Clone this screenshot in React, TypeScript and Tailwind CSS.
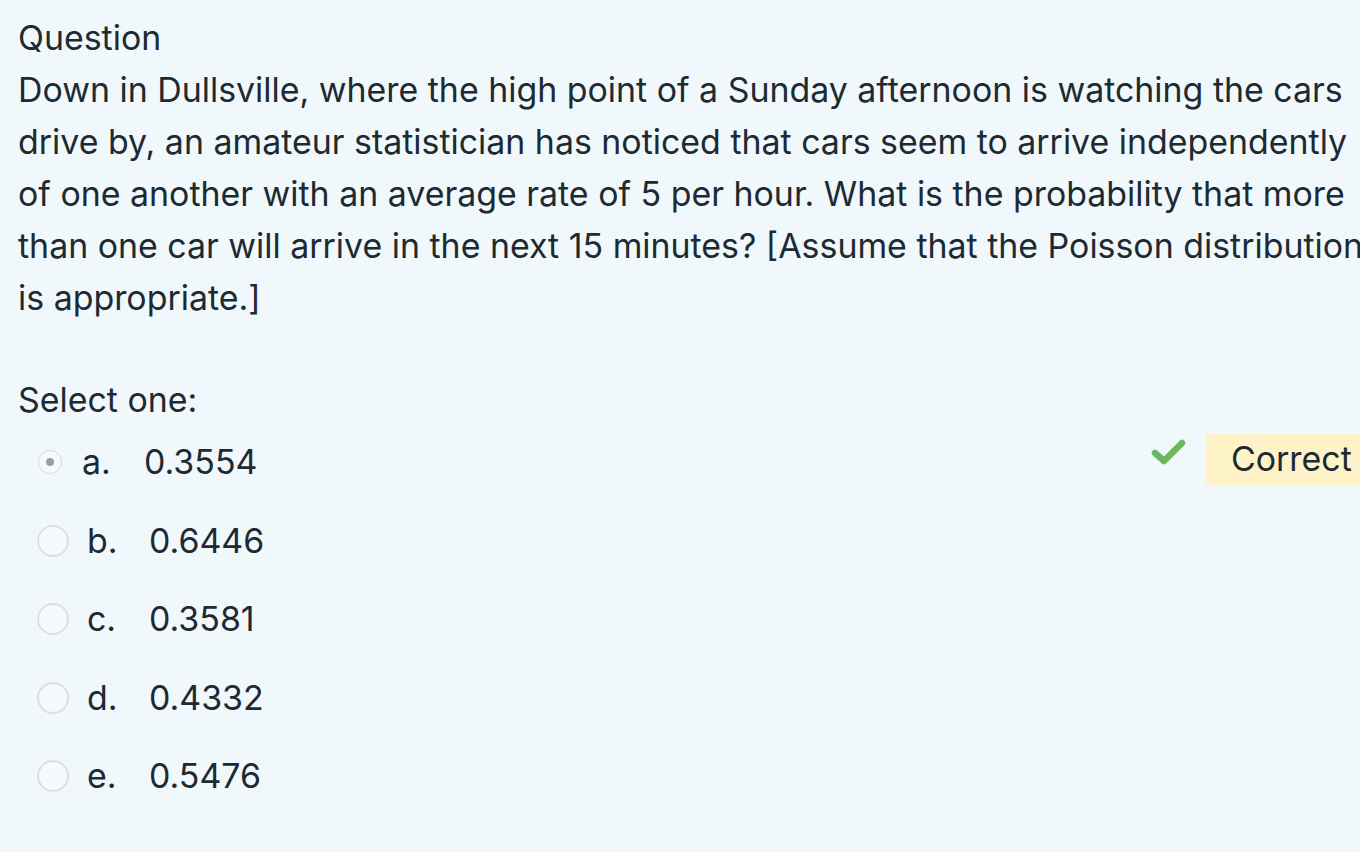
import React from 'react';

const lines = [
  'Down in Dullsville, where the high point of a Sunday afternoon is watching the cars',
  'drive by, an amateur statistician has noticed that cars seem to arrive independently',
  'of one another with an average rate of 5 per hour. What is the probability that more',
  'than one car will arrive in the next 15 minutes? [Assume that the Poisson distribution',
  'is appropriate.]',
];

const options = [
  { key: 'b.', value: '0.6446' },
  { key: 'c.', value: '0.3581' },
  { key: 'd.', value: '0.4332' },
  { key: 'e.', value: '0.5476' },
];

export default function App() {
  return (
    <div
      className="w-[1360px] h-[852px] overflow-hidden bg-[#f1f8fb] text-[#1d2a32] text-[33.9px] leading-[52px]"
      style={{ fontFamily: 'Inter, "Noto Sans", sans-serif' }}
    >
      <div className="pl-[18px] pt-[12px]">
        <div>Question</div>
        {lines.map((l) => (
          <div key={l} className="whitespace-nowrap">{l}</div>
        ))}

        <div className="mt-[50px]">Select one:</div>

        {/* answer a - selected, disabled */}
        <div className="flex items-center h-[52px] mt-[10px]">
          <div className="w-[24px] h-[24px] ml-[20px] rounded-full border border-[#d6dadc] bg-[#f7f9fa] flex items-center justify-center">
            <div className="w-[8px] h-[8px] rounded-full bg-[#9aa0a4]" />
          </div>
          <span className="ml-[20px] w-[62px]">a.</span>
          <span>0.3554</span>
          <div className="ml-auto flex items-center -mt-[6px]">
            <svg width="36" height="30" viewBox="0 0 36 30" className="mr-[19px] -mt-[14px]">
              <path d="M4 16 L13 24 L31 6" fill="none" stroke="#6cb65f" strokeWidth="6.5" strokeLinecap="round" strokeLinejoin="round" />
            </svg>
            <div className="bg-[#fdf2c8] h-[51px] w-[170px] pl-[25px] flex items-center whitespace-nowrap -mr-[16px]">Correct</div>
          </div>
        </div>

        {options.map((o) => (
          <div key={o.key} className="flex items-center h-[52px] mt-[26.5px]">
            <div className="w-[32px] h-[32px] ml-[19px] rounded-full border-2 border-[#dcdfe1] bg-[#f7fafc]" />
            <span className="ml-[18px] w-[62px]">{o.key}</span>
            <span>{o.value}</span>
          </div>
        ))}
      </div>
    </div>
  );
}
